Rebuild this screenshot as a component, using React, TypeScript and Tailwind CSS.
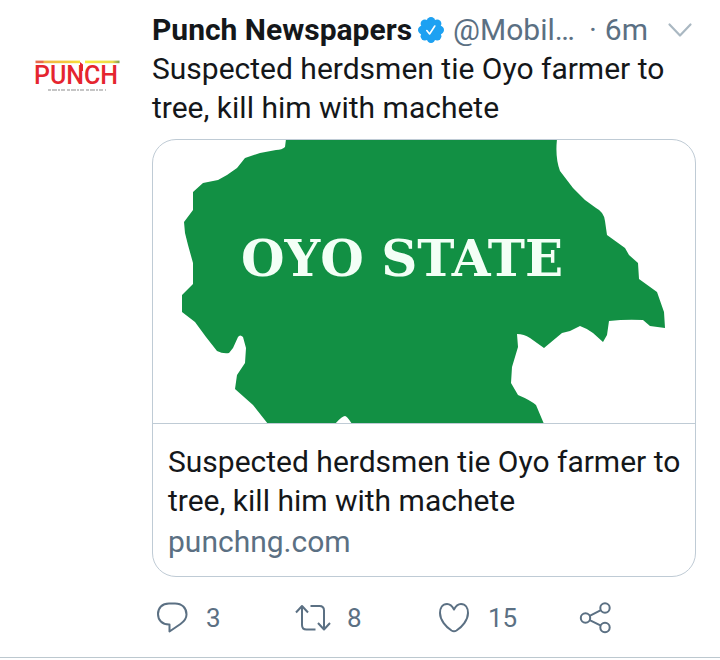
import type { ReactNode } from "react";

const headline = "Suspected herdsmen tie Oyo farmer to tree, kill him with machete";

function PunchLogo() {
  return (
    <svg viewBox="0 0 90 36" className="w-[90px] h-9" role="img" aria-label="Punch">
      <defs>
        <linearGradient id="barLeft">
          <stop offset="0" stopColor="#e8694a" />
          <stop offset=".16" stopColor="#e8694a" />
          <stop offset=".2" stopColor="#efb545" />
          <stop offset=".7" stopColor="#f5c93e" />
          <stop offset="1" stopColor="#f8e03c" />
        </linearGradient>
        <linearGradient id="barRight">
          <stop offset="0" stopColor="#faea3e" />
          <stop offset=".8" stopColor="#ecd94a" />
          <stop offset="1" stopColor="#7a9a50" />
        </linearGradient>
      </defs>
      <rect x="3.500" y="3.600" width="44.500" height="2.600" fill="url(#barLeft)" />
      <rect x="53" y="3.600" width="34.500" height="2.600" fill="url(#barRight)" />
      <path d="M48 5L51 7.500V14H48Z" fill="#e5252f" />
      <text x="2" y="27" fontSize="25" fontWeight="500" fill="#e5252f" className="font-['Roboto',sans-serif]">
        PUNCH
      </text>
      <path d="M16 33h58" stroke="#8b8b8b" strokeWidth="1" strokeDasharray="3 1 5 1 2 1 4 2" />
    </svg>
  );
}

function VerifiedBadge() {
  return (
    <svg viewBox="0 0 26 26" className="size-[26px] shrink-0" role="img" aria-label="Verified account">
      <g fill="#1da1f2">
        <circle cx="13" cy="13" r="10.3" />
        <circle cx="13" cy="4.2" r="4.2" />
        <circle cx="19.2" cy="6.8" r="4.2" />
        <circle cx="21.8" cy="13" r="4.2" />
        <circle cx="19.2" cy="19.2" r="4.2" />
        <circle cx="13" cy="21.8" r="4.2" />
        <circle cx="6.8" cy="19.2" r="4.2" />
        <circle cx="4.2" cy="13" r="4.2" />
        <circle cx="6.8" cy="6.8" r="4.2" />
      </g>
      <path d="M8.8 13.6l2.8 3.4 5.200-8" fill="none" stroke="#fff" strokeWidth="1.6" strokeLinecap="round" strokeLinejoin="round" />
    </svg>
  );
}

function OyoMap() {
  return (
    <svg viewBox="153 140 542 283" className="block w-full" role="img" aria-label="Map of Oyo State">
      <path
        fill="#129044"
        d="M286 139L285 147Q282 150 276 150L260 153L245 158L237 168L227 175L218 180L203 183L193 192V210L184 222L185 233L188 245L193 263V284L182 295V312L195 322L206 337L217 351Q223 354 229 353L233 348L238 337Q240 334 243 337L246 348L245 363L237 375L235 389L253 405L268 424H335Q342 416 345 416Q347 416 352 424H544L536 405Q530 400 518 395L511 383L512 367L518 347L517 334Q524 334 530 338L544 348L562 333L570 331L580 326Q586 328 593 333L603 342L607 335L609 321Q626 319 643 320L650 326L665 328L664 312L657 292L639 279L638 263L629 255L625 248L607 235L605 221Q604 212 596 208L585 200L573 188L560 171Q555 158 557 139Z"
      />
      <text x="241" y="276" fontSize="50" fontWeight="700" fill="#f3fff6" className="font-['DejaVu_Serif',serif]">
        OYO STATE
      </text>
    </svg>
  );
}

function Action({ label, count, children }: { label: string; count?: string; children: ReactNode }) {
  return (
    <button type="button" aria-label={label} className="flex items-center gap-4 text-left">
      <svg
        viewBox="0 0 36 36"
        className="size-9 shrink-0"
        fill="none"
        stroke="currentColor"
        strokeWidth="2"
        strokeLinejoin="round"
        aria-hidden="true"
      >
        {children}
      </svg>
      {count && <span>{count}</span>}
    </button>
  );
}

export default function App() {
  return (
    <article className="flex border-b border-[#bcc8cf] bg-white pt-[10px] pb-[21px] font-['Roboto',sans-serif] text-[30px] leading-[39px] text-[#14171a]">
      <a href="#profile" className="mt-[47px] ml-8 mr-[30px] h-9 shrink-0">
        <PunchLogo />
      </a>
      <div className="min-w-0 flex-1">
        <header className="mr-[26px] flex items-center">
          <a href="#profile" className="font-bold whitespace-nowrap">
            Punch Newspapers
          </a>
          <span className="ml-1.5 mr-[9px] flex">
            <VerifiedBadge />
          </span>
          <span className="whitespace-nowrap text-[#5b7083]">@Mobil…</span>
          <span className="ml-auto mr-2 text-[#5b7083]">·</span>
          <time className="text-[#5b7083]">6m</time>
          <button type="button" aria-label="More options" className="ml-[18px] text-[#aab8c2]">
            <svg viewBox="0 0 28 24" className="block h-6 w-7" fill="none" stroke="currentColor" strokeWidth="2.2" strokeLinecap="round" strokeLinejoin="round">
              <path d="M3.5 6.5L14 17.5L24.5 6.5" />
            </svg>
          </button>
        </header>
        <p className="mr-6">{headline}</p>
        <a href="#story" className="mt-3 mr-6 block overflow-hidden rounded-3xl border border-[#bfcbd5]">
          <OyoMap />
          <div className="border-t border-[#bfcbd5] pt-[18px] pr-3 pb-[15px] pl-[15px]">
            <p>{headline}</p>
            <p className="mt-0.5 text-[#5b7083]">punchng.com</p>
          </div>
        </a>
        <div className="mt-[23px] grid grid-cols-4 pr-0.5 pl-0.5 text-[26px] leading-9 text-[#5b7083]">
          <Action label="Reply" count="3">
            <path d="M15 3.500h6C28 3.500 32.500 8 32.500 14.500c0 4-2.500 7-6 9.500L15.500 31.500V24.500h-.5C8 24.500 4 20 4 14S8 3.500 15 3.500Z" />
          </Action>
          <Action label="Retweet" count="8">
            <path d="M1 12.500L7 6l6 6.500M7 6.500V25q0 4.500 4.500 4.500H20.500M35 23l-6 6.500L23 23M29 29V10.500q0-4.500-4.500-4.500H15.500" />
          </Action>
          <Action label="Like" count="15">
            <path d="M18 9.500C16 5.500 13.500 4 11 4C6.500 4 4 8 4 13C4 20 10 27 15.500 30.500Q18 32 20.500 30.500C26 27 32 20 32 13C32 8 29.500 4 25 4C22.500 4 20 5.500 18 9.500Z" />
          </Action>
          <Action label="Share">
            <circle cx="8.500" cy="18" r="4.700" />
            <circle cx="28" cy="8" r="4.700" />
            <circle cx="28" cy="27.500" r="4.700" />
            <path d="M12.700 15.800l11.200-5.700M12.700 20.200l11.200 5.500" />
          </Action>
        </div>
      </div>
    </article>
  );
}
